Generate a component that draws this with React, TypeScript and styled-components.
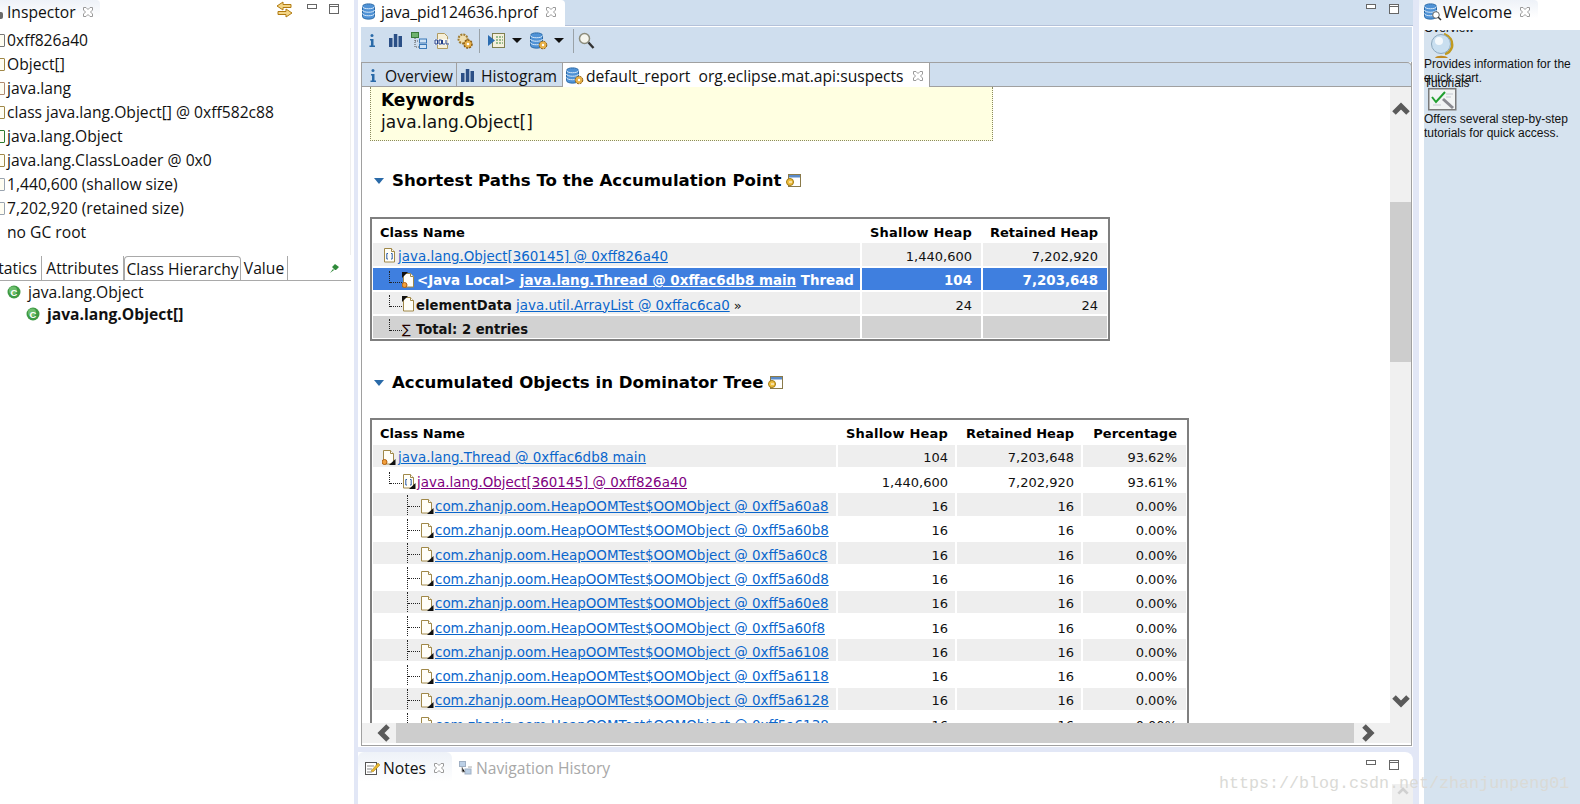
import React from 'react';
import styled, { createGlobalStyle } from 'styled-components';

const Global = createGlobalStyle`
  html, body { margin: 0; padding: 0; background: #e2e7f6; overflow: hidden; }
  * { box-sizing: border-box; }
`;
const ui = `"Open Sans", "Noto Sans", sans-serif`;
const vd = `"DejaVu Sans", Verdana, sans-serif`;

const Root = styled.div`
  position: relative; display: flex; width: 1580px; height: 804px; overflow: hidden; background: #e2e7f6;
  font-family: ${ui}; font-size: 15.65px; color: #111;
`;
const Left = styled.aside`width: 354px; height: 100%; background: #fff; display: flex; flex-direction: column; flex: none;`;
const Middle = styled.main`width: 1055px; margin-left: 4px; display: flex; flex-direction: column; flex: none;`;
const Right = styled.aside`margin-left: 6px; flex: 1; background: #fff; display: flex; flex-direction: column; position: relative; overflow: hidden;`;

const TabBar = styled.div<{ $bg?: string }>`
  height: 26px; flex: none; display: flex; align-items: stretch; position: relative; background: ${p => p.$bg || '#fff'};
`;
const ViewTab = styled.div<{ $w: number }>`
  width: ${p => p.$w}px; height: 26px; flex: none; display: flex; align-items: center; background: linear-gradient(#eef2f8, #fff 70%);
  border-top-right-radius: 4px; white-space: pre; overflow: hidden; padding-bottom: 2px; position: relative;
`;
const EditorTab = styled(ViewTab)`background: #fff;`;
const Label = styled.span<{ $ml?: number; $mr?: number; $fs?: number }>`
  margin-left: ${p => p.$ml || 0}px; margin-right: ${p => p.$mr || 0}px; line-height: 24px;
  ${p => p.$fs ? `font-size: ${p.$fs}px;` : ''}
`;
const WinBtns = styled.div`margin-left: auto; display: flex; align-items: flex-start; gap: 13px; padding-top: 4px;`;
const TabGlyphStub = styled.i`position: absolute; left: 0; top: 12px; width: 3px; height: 7px; background: #6a6a6a; border-radius: 0 2px 2px 0; display: block;`;

const Close = () => (
  <svg width="12" height="12" viewBox="0 0 12 12" style={{ flex: 'none' }}>
    <path d="M1.5 1.5h2.5L6 3.5 8 1.5h2.5v2.5L8.5 6l2 2v2.500H8L6 8.500 4 10.500H1.500V8l2-2-2-2z" fill="#fff" stroke="#9a9a9a" />
  </svg>
);
const Min = () => <svg width="10" height="6" viewBox="0 0 10 6"><rect x=".5" y=".5" width="9" height="4" fill="#fff" stroke="#666" /></svg>;
const Max = () => <svg width="11" height="10" viewBox="0 0 11 10"><rect x=".5" y=".5" width="9" height="9" fill="#fff" stroke="#666" /><path d="M0 2.500h10" stroke="#666" /></svg>;

const Db = ({ gear, glass }: { gear?: boolean; glass?: boolean }) => (
  <svg width="18" height="18" viewBox="0 0 18 18" style={{ flex: 'none' }}>
    <path d="M.5 3.500c0-3.500 12-3.500 12 0v10c0 3.500-12 3.500-12 0z" fill="#4f92d6" stroke="#2a6aa8" />
    <path d="M.5 3.500c0 3 12 3 12 0M.5 7c0 3 12 3 12 0M.5 10.500c0 3 12 3 12 0" fill="none" stroke="#d7e8f8" />
    {gear && <><circle cx="13" cy="13" r="3.800" fill="#e8b24a" stroke="#8a5a10" strokeDasharray="2 1" /><circle cx="13" cy="13" r="1.200" fill="#fff" /></>}
    {glass && <><circle cx="12" cy="12" r="3.300" fill="#fff" stroke="#666" /><path d="M14 14l3 3" stroke="#333" strokeWidth="1.500" /></>}
  </svg>
);
const InfoI = () => (
  <svg width="10" height="15" viewBox="0 0 10 15" style={{ flex: 'none' }}>
    <circle cx="5" cy="2.500" r="1.500" fill="#2a6aa8" />
    <path d="M3 6h3.500v6.500H8v1.500H2.500v-1.500H4V7.500H3z" fill="#2a6aa8" />
  </svg>
);
const Bars = () => (
  <svg width="13" height="13" viewBox="0 0 13 13" style={{ flex: 'none' }}>
    <path d="M0 4h3.500v9H0zM4.800 0h3.500v13H4.800zM9.500 2h3.500v11H9.500z" fill="#2b4f86" />
  </svg>
);
const Hier = () => (
  <svg width="16" height="17" viewBox="0 0 16 17">
    <rect x=".5" y=".5" width="7" height="5" fill="#6fb36f" stroke="#3a7a3a" />
    <path d="M4 6v9h4M4 9h4" fill="none" stroke="#555" strokeDasharray="1 1" />
    <rect x="8.500" y="7" width="7" height="4" fill="#cfe2f5" stroke="#3a78b8" />
    <rect x="8.500" y="12.500" width="7" height="4" fill="#cfe2f5" stroke="#3a78b8" />
  </svg>
);
const Oql = () => (
  <svg width="16" height="16" viewBox="0 0 16 16">
    <path d="M3.500.5h7l3 3v12h-10z" fill="#f6efd8" stroke="#b09a60" />
    <rect x="0" y="6" width="16" height="6" fill="#fff" opacity=".6" />
    <path d="M1 7h2.500v4H1zM5 7h2.500v4H5zM8.500 7v4H11M12 7v4h3" fill="none" stroke="#24408a" />
  </svg>
);
const Gear = () => (
  <svg width="18" height="18" viewBox="0 0 18 18">
    <circle cx="7" cy="7" r="4.500" fill="#f0dfb0" stroke="#a07c30" strokeWidth="2" strokeDasharray="2 1" />
    <circle cx="12" cy="12" r="4" fill="#e8b24a" stroke="#8a5a10" strokeWidth="1.500" strokeDasharray="2 1" />
    <circle cx="12" cy="12" r="1.300" fill="#fff" />
  </svg>
);
const RunList = () => (
  <svg width="17" height="17" viewBox="0 0 17 17">
    <rect x="4.500" y="1.500" width="12" height="14" fill="#f4efdc" stroke="#7f7f4f" />
    <path d="M8 5h7M8 8h7M8 11h7" stroke="#3c8a3c" strokeDasharray="2 1" />
    <path d="M0 3l7 5.500L0 14z" fill="#2b6cb0" />
  </svg>
);
const Search = () => (
  <svg width="17" height="17" viewBox="0 0 17 17">
    <circle cx="6.500" cy="6.500" r="5" fill="#f6f6ee" stroke="#8c8c7c" strokeWidth="1.500" />
    <path d="M10.500 10.500l5 5.500" stroke="#333" strokeWidth="2.400" />
  </svg>
);
const Drop = styled.i`width: 0; height: 0; border-left: 5px solid transparent; border-right: 5px solid transparent; border-top: 5px solid #111; display: block; flex: none;`;
const Sep = styled.i`width: 1px; height: 24px; background: #9aa2a8; display: block; flex: none;`;
const Sync = () => (
  <svg width="17" height="17" viewBox="0 0 17 17">
    <path d="M7 1L1 5l6 4V6.500h8v-3H7zM10 8l6 4-6 4v-2.500H2v-3h8z" fill="#f4d585" stroke="#b07a10" />
  </svg>
);
const Pin = () => (
  <svg width="10" height="10" viewBox="0 0 10 10"><path d="M5 1l4 3-3 3-1 0-3-3zM3 6l-3 4 4-3z" fill="#2f8a3a" /></svg>
);
const ClassC = () => (
  <svg width="14" height="14" viewBox="0 0 14 14" style={{ flex: 'none' }}>
    <circle cx="7" cy="7" r="6.500" fill="#3e9a44" />
    <circle cx="6" cy="5.500" r="4" fill="#6cbe6c" />
    <text x="7" y="10.500" textAnchor="middle" fontFamily="Liberation Sans" fontWeight="700" fontSize="9.500" fill="#fff">C</text>
  </svg>
);

type Over = 'tl' | 'br' | undefined;
const ObjIcon = ({ over, arr, loc }: { over?: Over; arr?: boolean; loc?: boolean }) => (
  <svg width="15" height="18" viewBox="0 0 15 18" style={{ flex: 'none' }}>
    <path d="M1.500 1.500h7l3 3v10.500h-10z" fill="#fffef8" stroke="#a08848" />
    <path d="M8.500 1.500v3h3" fill="#fff" stroke="#a08848" />
    {arr && <path d="M5 6.500H3.800v5.500H5M8 6.500h1.200v5.500H8" fill="none" stroke="#2a5aa8" />}
    {loc && <circle cx="2.500" cy="13" r="2.500" fill="#f2a03c" stroke="#b06010" />}
    {over === 'tl' && <path d="M0 0h6l-6 6z" fill="#111" />}
    {over === 'br' && <path d="M7 16h6.500v-6z" fill="#111" />}
  </svg>
);
const SigmaGlyph = styled.span`font-family: "DejaVu Sans", sans-serif; font-size: 13px; width: 13px; color: #200; flex: none;`;

/* left panel */
const InspectorList = styled.div`height: 227px; margin-top: 2px; border-right: 1px solid #eeeeee; margin-right: 3px; flex: none;`;
const InspectorRow = styled.div`height: 24px; display: flex; align-items: center; padding-left: 7px; white-space: pre; position: relative;`;
const Clipped = styled.span<{ $c: string }>`position: absolute; left: -7px; top: 6px; width: 12px; height: 13px; border: 1px solid ${p => p.$c}; border-radius: 1px; background: #fffdf2;`;
const LowerTabs = styled.div`height: 25px; margin-top: 1px; display: flex; align-items: stretch; border-bottom: 1px solid #a9a9a9; margin-right: 3px; position: relative; flex: none; overflow: hidden;`;
const LowerTab = styled.div<{ $w: number; $active?: boolean }>`
  width: ${p => p.$w}px; flex: none; display: flex; justify-content: center; align-items: center; margin-bottom: ${p => p.$active ? '-1px' : '0'};
  ${p => p.$active ? 'border: 1px solid #a9a9a9; border-bottom: 1px solid #fff; border-radius: 4px 4px 0 0; background:#fff;' : 'border-right: 1px solid #a9a9a9;'}
  overflow: hidden; white-space: nowrap;
`;
const ClippedLowerTab = styled(LowerTab)`justify-content: flex-end; padding-right: 4px;`;
const PinSlot = styled.div`margin-left: auto; margin-right: 11px; align-self: center; display: flex;`;
const TreeRow = styled.div<{ $pad: number; $bold?: boolean }>`
  height: 22px; display: flex; align-items: center; gap: 7px; padding-left: ${p => p.$pad}px; font-weight: ${p => p.$bold ? 700 : 400}; flex: none;
`;
const SyncWrap = styled.span`display: flex; margin-right: 2px;`;
const BtnWrap = styled.span`display: flex; margin-top: 3px;`;

/* editor */
const Editor = styled.section`height: 747px; background: #fff; display: flex; flex-direction: column; flex: none;`;
const EditorHead = styled(TabBar)`border-bottom: 1px solid #b4c1d9;`;
const EditorBody = styled.div`flex: 1; min-height: 0; padding: 1px 1px 1px 3px; display: flex; flex-direction: column;`;
const Toolbar = styled.div`height: 35px; background: #cfdeee; display: flex; align-items: center; flex: none; padding: 0 0 8px 5px;`;
const Tool = styled.div<{ $w: number; $ml?: number }>`width: ${p => p.$w}px; margin-left: ${p => p.$ml || 0}px; display: flex; justify-content: center; align-items: center; flex: none;`;
const Frame = styled.div`flex: 1; min-height: 0; border: 1px solid #a0a0a0; border-top: 0; display: flex; flex-direction: column;`;
const FolderTabs = styled.div`height: 25px; flex: none; background: #cfdeee; border-top: 1px solid #a0a0a0; border-right: 1px solid #a0a0a0; border-top-right-radius: 5px; border-bottom: 1px solid #a0a0a0; display: flex; margin-right: -1px;`;
const FolderTab = styled.div<{ $w: number; $active?: boolean }>`
  width: ${p => p.$w}px; flex: none; display: flex; align-items: center; white-space: pre; padding-top: 2px;
  margin-bottom: ${p => p.$active ? '-1px' : '0'};
  background: ${p => p.$active ? '#fff' : 'transparent'};
  border-right: 1px solid #a0a0a0;
`;
const Viewport = styled.div`display: grid; grid-template-columns: 1fr 21px; grid-template-rows: 636px 20px; flex: none; height: 656px;`;
const Report = styled.div`overflow: hidden; background: #fff; font-family: ${vd}; font-size: 13px; padding-left: 8px;`;
const Keywords = styled.div`
  width: 623px; height: 54px; background: #ffffe1; border: 1px dotted #8a8a60; border-top: 0; padding: 2px 0 0 10px; font-size: 17px; line-height: 22px;
`;
const KeyTitle = styled.div`font-weight: 700; color: #000;`;
const Heading = styled.div<{ $mt: number }>`
  height: 22px; margin-top: ${p => p.$mt}px; display: flex; align-items: center; font-weight: 700; font-size: 16.6px; color: #000; white-space: pre;
`;
const Twist = styled.i`width: 0; height: 0; border-left: 5px solid transparent; border-right: 5px solid transparent; border-top: 6px solid #2a6aa8; margin: 2px 8px 0 4px; display: block; flex: none;`;
const Help = () => (
  <svg width="15" height="13" viewBox="0 0 15 13" style={{ marginLeft: 5, flex: 'none' }}>
    <rect x="2.500" y=".5" width="12" height="12" fill="#fff" stroke="#8a7a4a" />
    <rect x="3" y="1" width="11" height="2.500" fill="#5a8ac8" />
    <circle cx="4" cy="8" r="3.500" fill="#f0c040" stroke="#a07810" />
    <path d="M3 8h3" stroke="#fff" />
  </svg>
);
const TableWrap = styled.div<{ $cols: string; $w: number; $mt: number }>`
  margin-top: ${p => p.$mt}px; width: ${p => p.$w}px; border: 2px solid #7f7f7f; padding: 0 1px 1px; display: grid;
  grid-template-columns: ${p => p.$cols}; grid-auto-rows: 22.3px; gap: 2px; font-size: 13px; color: #111;
`;
const HeadCell = styled.div<{ $num?: boolean; $pr?: number; $wide?: boolean }>`
  height: 23px; font-weight: 700; color: #000; display: flex; align-items: center; white-space: nowrap;
  padding: 4px ${p => p.$pr ?? 9}px 0 7px;
  justify-content: ${p => p.$num ? 'flex-end' : 'flex-start'};
  ${p => p.$wide ? 'letter-spacing: .2px;' : ''}
`;
type Tone = 'odd' | 'even' | 'sel' | 'total';
const tone: Record<Tone, string> = { odd: '#eeeeee', even: '#fff', sel: '#3f7fdf', total: '#d2d2d2' };
const Cell = styled.div<{ $t: Tone; $num?: boolean; $pad?: number; $pr?: number }>`
  background: ${p => tone[p.$t]}; color: ${p => p.$t === 'sel' ? '#fff' : '#111'}; font-weight: ${p => p.$t === 'sel' ? 700 : 400};
  font-size: ${p => p.$t === 'sel' ? '13.4px' : '13px'};
  display: flex; align-items: center; white-space: pre; overflow: hidden;
  justify-content: ${p => p.$num ? 'flex-end' : 'flex-start'};
  padding: 4px ${p => p.$num ? `${p.$pr ?? 9}px 0 0` : `0 0 ${p.$pad || 0}px`};
`;
const Link = styled.a<{ $c?: string }>`color: ${p => p.$c || '#0a66cc'}; text-decoration: underline; font-size: 13.45px;`;
const Strong = styled.b`font-weight: 700; color: inherit; font-size: 13.2px;`;
const CellText = styled.span<{ $ml?: number }>`margin-left: ${p => p.$ml || 0}px;`;
const Branch = styled.i<{ $tall?: boolean }>`
  display: block; flex: none; width: 13px; height: ${p => p.$tall ? 22 : 12}px; margin-top: ${p => p.$tall ? -2 : -8}px;
  border-left: 1px dotted #222; position: relative;
  &::after { content: ''; position: absolute; left: 0; top: 11px; width: 12px; border-top: 1px dotted #222; }
`;
const VBar = styled.div`background: #f0f0f0; display: flex; flex-direction: column; align-items: center;`;
const VThumb = styled.div`width: 100%; height: 160px; background: #cdcdcd; margin-top: 87px; flex: none;`;
const Chev = ({ d }: { d: string }) => (
  <svg width={18} height={18} viewBox="0 0 18 18" style={{ flex: 'none' }}>
    <path d={d} fill="none" stroke="#5a5a5a" strokeWidth="5" />
  </svg>
);
const UpChev = styled.div`margin-top: 13px; height: 15px; display: flex;`;
const DownChev = styled.div`margin-top: auto; margin-bottom: 13px; display: flex;`;
const HBar = styled.div`background: #f0f0f0; display: flex; align-items: center;`;
const HThumb = styled.div`height: 100%; width: 958px; background: #cdcdcd; flex: none;`;
const HArrow = styled.div<{ $w: number; $end?: boolean }>`
  width: ${p => p.$w}px; display: flex; flex: none;
  ${p => p.$end ? 'justify-content: flex-end; padding-right: 3px;' : 'padding-left: 5px;'}
`;
const Corner = styled.div`background: #f0f0f0;`;

/* notes */
const Notes = styled.section`margin-top: 5px; flex: 1; min-height: 0; background: #fff; border-top-right-radius: 8px; position: relative;`;
const NotesHead = styled.div`display: flex; height: 30px;`;
const NotesTab = styled.div`width: 94px; height: 30px; padding-top: 2px; display: flex; align-items: center; background: linear-gradient(#eef2f8, #fff); border-top-right-radius: 6px; border-top-left-radius: 6px; flex: none;`;
const NavTab = styled.div`margin-left: 7px; padding-top: 2px; display: flex; align-items: center; gap: 3px; color: #a8a8a8;`;
const NotesTool = styled.div`margin-left: auto; margin-right: 13px; display: flex; gap: 13px; padding-top: 8px;`;
const NotesScroll = styled.div`position: absolute; right: 0; bottom: 0; width: 21px; height: 20px; background: #f0f0f0; display: flex; justify-content: center; padding-top: 3px;`;

/* welcome */
const WelcomeBody = styled.div`flex: 1; margin: 4px 0 0 5px; background: #d6e3ef; overflow: hidden; font-family: "Liberation Sans", Arial, sans-serif; font-size: 12px; color: #111;`;
const WelcomeList = styled.div`margin-top: -9px; display: grid; grid-auto-rows: 54.5px;`;
const WelcomeItem = styled.div`display: flex; flex-direction: column; align-items: flex-start; line-height: 14px;`;
const WelcomeDesc = styled.div`width: 156px; flex: none;`;
const WelcomeTitle = styled.div`flex: none;`;
const Globe = () => (
  <svg width="24" height="26" viewBox="0 0 24 26" style={{ marginLeft: 7, marginTop: -2, marginBottom: -2, display: 'block', flex: 'none' }}>
    <path d="M13 1c6 2 9 7 8 13-1 3-3 6-7 7" fill="none" stroke="#c09a20" strokeWidth="2.500" />
    <circle cx="10" cy="11" r="9.500" fill="#c9dff0" stroke="#8ca8bc" />
    <circle cx="8" cy="8" r="4" fill="#fff" opacity=".8" />
    <path d="M4 25c1-3 11-3 13 0z" fill="#c08a20" />
  </svg>
);
const Check = () => (
  <svg width="29" height="23" viewBox="0 0 29 23" style={{ marginLeft: 4, marginTop: -2, marginBottom: 1, display: 'block', flex: 'none' }}>
    <rect x=".75" y=".75" width="27" height="21" fill="#f2f4f4" stroke="#7a7a7a" strokeWidth="1.500" />
    <path d="M4 9l4 5 9-10" fill="none" stroke="#22a030" strokeWidth="2" />
    <path d="M15 11l10 9" stroke="#8a8a90" strokeWidth="3" />
    <path d="M5 17h8M18 6h7M18 9h5" stroke="#c4c8d0" />
  </svg>
);
const Watermark = styled.div`
  position: absolute; left: 1219px; top: 774px; font-family: "Liberation Mono", monospace; font-size: 16.68px; line-height: 20px; color: #dadad6; white-space: pre; pointer-events: none;
`;

const linkRows = ['a8', 'b8', 'c8', 'd8', 'e8', 'f8', '108', '118', '128', '138'];
const addr = (s: string) => s.length === 2 ? `0xff5a60${s}` : `0xff5a6${s}`;
const inspector = [
  ['0xff826a40', '#777'], ['Object[]', '#a08848'], ['java.lang', '#b08a70'], ['class java.lang.Object[] @ 0xff582c88', '#a08848'],
  ['java.lang.Object', '#2f7a2f'], ['java.lang.ClassLoader @ 0x0', '#a08848'], ['1,440,600 (shallow size)', '#9aa4b0'], ['7,202,920 (retained size)', '#9aa4b0'], ['no GC root', ''],
];

const Icon = styled.span<{ $ml?: number }>`display: flex; margin-left: ${p => p.$ml || 0}px; flex: none;`;

export default function App() {
  return (
    <Root>
      <Global />
      <Left>
        <TabBar>
          <ViewTab $w={100}><TabGlyphStub /><Label $ml={7}>Inspector</Label><Icon $ml={6}><Close /></Icon></ViewTab>
          <WinBtns style={{ marginRight: 14, gap: 12, paddingTop: 1 }}>
            <SyncWrap><Sync /></SyncWrap><BtnWrap><Min /></BtnWrap><BtnWrap><Max /></BtnWrap>
          </WinBtns>
        </TabBar>
        <InspectorList>
          {inspector.map(([t, c]) => (
            <InspectorRow key={t}>{c && <Clipped $c={c} />}{t}</InspectorRow>
          ))}
        </InspectorList>
        <LowerTabs>
          <ClippedLowerTab $w={42}>tatics</ClippedLowerTab>
          <LowerTab $w={82}>Attributes</LowerTab>
          <LowerTab $w={117} $active>Class Hierarchy</LowerTab>
          <LowerTab $w={47}>Value</LowerTab>
          <PinSlot><Pin /></PinSlot>
        </LowerTabs>
        <TreeRow $pad={7}><ClassC /><span>java.lang.Object</span></TreeRow>
        <TreeRow $pad={26} $bold><ClassC /><span>java.lang.Object[]</span></TreeRow>
      </Left>

      <Middle>
        <Editor>
          <EditorHead $bg="#cfdeee">
            <EditorTab $w={207}>
              <Icon $ml={4}><Db /></Icon>
              <Label $ml={1}>java_pid124636.hprof</Label>
              <Icon $ml={7}><Close /></Icon>
            </EditorTab>
            <WinBtns style={{ marginRight: 13 }}><Min /><Max /></WinBtns>
          </EditorHead>
          <EditorBody>
            <Toolbar>
              <Tool $w={11}><InfoI /></Tool>
              <Tool $w={13} $ml={12}><Bars /></Tool>
              <Tool $w={16} $ml={9}><Hier /></Tool>
              <Tool $w={16} $ml={7}><Oql /></Tool>
              <Tool $w={18} $ml={6}><Gear /></Tool>
              <Tool $w={1} $ml={5}><Sep /></Tool>
              <Tool $w={17} $ml={8}><RunList /></Tool>
              <Tool $w={10} $ml={7}><Drop /></Tool>
              <Tool $w={18} $ml={8}><Db gear /></Tool>
              <Tool $w={10} $ml={6}><Drop /></Tool>
              <Tool $w={1} $ml={9}><Sep /></Tool>
              <Tool $w={17} $ml={4}><Search /></Tool>
            </Toolbar>
            <Frame>
              <FolderTabs>
                <FolderTab $w={95}><Icon $ml={6}><InfoI /></Icon><Label $ml={7}>Overview</Label></FolderTab>
                <FolderTab $w={106}><Icon $ml={4}><Bars /></Icon><Label $ml={7}>Histogram</Label></FolderTab>
                <FolderTab $w={367} $active>
                  <Icon $ml={3}><Db gear /></Icon>
                  <Label $ml={2}>default_report  org.eclipse.mat.api:suspects</Label>
                  <Icon $ml={8}><Close /></Icon>
                </FolderTab>
              </FolderTabs>
              <Viewport>
                <Report>
                  <Keywords>
                    <KeyTitle>Keywords</KeyTitle>
                    <div>java.lang.Object[]</div>
                  </Keywords>
                  <Heading $mt={28}><Twist />Shortest Paths To the Accumulation Point<Help /></Heading>
                  <TableWrap $mt={26} $cols="487px 119px 124px" $w={740}>
                    <HeadCell>Class Name</HeadCell><HeadCell $num $wide>Shallow Heap</HeadCell><HeadCell $num>Retained Heap</HeadCell>
                    <Cell $t="odd" $pad={10}><ObjIcon arr /><Link>java.lang.Object[360145] @ 0xff826a40</Link></Cell><Cell $t="odd" $num>1,440,600</Cell><Cell $t="odd" $num>7,202,920</Cell>
                    <Cell $t="sel" $pad={16}><Branch /><ObjIcon over="tl" loc /><CellText>{'<Java Local> '}<Link $c="#fff">java.lang.Thread @ 0xffac6db8 main</Link> Thread</CellText></Cell><Cell $t="sel" $num>104</Cell><Cell $t="sel" $num>7,203,648</Cell>
                    <Cell $t="odd" $pad={16}><Branch /><ObjIcon over="tl" /><CellText $ml={-1}><Strong>elementData</Strong> <Link>java.util.ArrayList @ 0xffac6ca0</Link> »</CellText></Cell><Cell $t="odd" $num>24</Cell><Cell $t="odd" $num>24</Cell>
                    <Cell $t="total" $pad={16}><Branch /><SigmaGlyph>∑</SigmaGlyph><CellText $ml={1}><Strong>Total: 2 entries</Strong></CellText></Cell><Cell $t="total" /><Cell $t="total" />
                  </TableWrap>
                  <Heading $mt={30}><Twist />Accumulated Objects in Dominator Tree<Help /></Heading>
                  <TableWrap $mt={25} $cols="463px 117px 124px 103px" $w={819}>
                    <HeadCell>Class Name</HeadCell><HeadCell $num $pr={7} $wide>Shallow Heap</HeadCell><HeadCell $num $pr={7}>Retained Heap</HeadCell><HeadCell $num>Percentage</HeadCell>
                    <Cell $t="odd" $pad={9}><ObjIcon over="br" loc /><Link style={{ marginLeft: 1 }}>java.lang.Thread @ 0xffac6db8 main</Link></Cell><Cell $t="odd" $num $pr={7}>104</Cell><Cell $t="odd" $num $pr={7}>7,203,648</Cell><Cell $t="odd" $num>93.62%</Cell>
                    <Cell $t="even" $pad={16}><Branch /><ObjIcon over="br" arr /><Link $c="#800080">java.lang.Object[360145] @ 0xff826a40</Link></Cell><Cell $t="even" $num $pr={7}>1,440,600</Cell><Cell $t="even" $num $pr={7}>7,202,920</Cell><Cell $t="even" $num>93.61%</Cell>
                    {linkRows.map((r, i) => {
                      const t: Tone = i % 2 === 0 ? 'odd' : 'even';
                      return (
                        <React.Fragment key={r}>
                          <Cell $t={t} $pad={34}><Branch $tall /><ObjIcon over="br" /><Link>{`com.zhanjp.oom.HeapOOMTest$OOMObject @ ${addr(r)}`}</Link></Cell>
                          <Cell $t={t} $num $pr={7}>16</Cell><Cell $t={t} $num $pr={7}>16</Cell><Cell $t={t} $num>0.00%</Cell>
                        </React.Fragment>
                      );
                    })}
                  </TableWrap>
                </Report>
                <VBar>
                  <UpChev><Chev d="M2 13l7-7 7 7" /></UpChev>
                  <VThumb />
                  <DownChev><Chev d="M2 5l7 7 7-7" /></DownChev>
                </VBar>
                <HBar>
                  <HArrow $w={34} $end><Chev d="M13 2L6 9l7 7" /></HArrow>
                  <HThumb />
                  <HArrow $w={36}><Chev d="M5 2l7 7-7 7" /></HArrow>
                </HBar>
                <Corner />
              </Viewport>
            </Frame>
          </EditorBody>
        </Editor>
        <Notes>
          <NotesHead>
            <NotesTab>
              <Icon $ml={7}>
                <svg width="15" height="14" viewBox="0 0 15 14"><rect x=".5" y="1.500" width="11" height="12" fill="#fff" stroke="#555" /><path d="M2 5h7M2 8h5M2 11h5" stroke="#888" /><path d="M6 10l7-8 2 2-7 7z" fill="#e8b830" stroke="#a07810" strokeWidth=".5" /></svg>
              </Icon>
              <Label $ml={3}>Notes</Label>
              <Icon $ml={7}><Close /></Icon>
            </NotesTab>
            <NavTab>
              <svg width="14" height="14" viewBox="0 0 14 14"><rect x=".5" y=".5" width="6" height="5" fill="#bcd0e6" stroke="#a0b0c4" /><rect x="6" y="8" width="6" height="5" fill="#bcd0e6" stroke="#a0b0c4" /><path d="M3 6v5h3M9 6h4" stroke="#aaa" /></svg>
              <span>Navigation History</span>
            </NavTab>
            <NotesTool><Min /><Max /></NotesTool>
          </NotesHead>
          <NotesScroll><svg width="12" height="8" viewBox="0 0 18 12"><path d="M2 10l7-7 7 7" fill="none" stroke="#d0d0d0" strokeWidth="4" /></svg></NotesScroll>
        </Notes>
      </Middle>

      <Right>
        <TabBar>
          <ViewTab $w={119}>
            <Icon $ml={5}><Db glass /></Icon>
            <Label $ml={1} $fs={16}>Welcome</Label>
            <Icon $ml={7}><Close /></Icon>
          </ViewTab>
        </TabBar>
        <WelcomeBody>
          <WelcomeList>
            <WelcomeItem><WelcomeTitle>Overview</WelcomeTitle><Globe /><WelcomeDesc>Provides information for the quick start.</WelcomeDesc></WelcomeItem>
            <WelcomeItem><WelcomeTitle>Tutorials</WelcomeTitle><Check /><WelcomeDesc>Offers several step-by-step tutorials for quick access.</WelcomeDesc></WelcomeItem>
          </WelcomeList>
        </WelcomeBody>
      </Right>
      <Watermark>https://blog.csdn.net/zhanjunpeng01</Watermark>
    </Root>
  );
}
